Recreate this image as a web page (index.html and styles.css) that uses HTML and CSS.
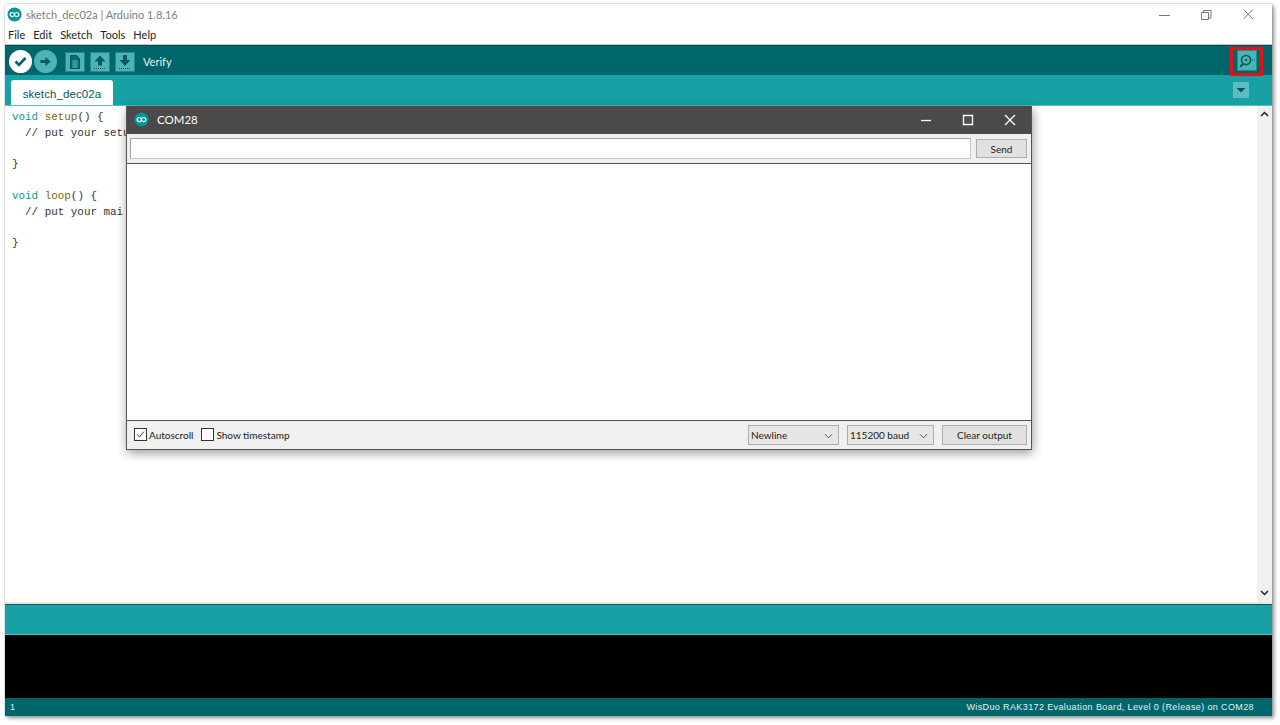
FILE: index.html
```html
<!DOCTYPE html>
<html lang="en">
<head>
<meta charset="utf-8">
<title>sketch_dec02a | Arduino 1.8.16</title>
<link rel="stylesheet" href="styles.css">
</head>
<body>
<div class="window">
  <header class="titlebar">
    <svg class="logo" viewBox="0 0 16 16"><circle cx="8" cy="8" r="7.500" fill="#00979c"/><path d="M6 5.800C4.500 5.800 3.300 6.800 3.300 8s1.200 2.200 2.700 2.200S8 8 8 8 7.500 5.800 6 5.800zm4 0C8.500 5.800 8 8 8 8s.5 2.200 2 2.200 2.700-1 2.700-2.200-1.200-2.200-2.700-2.200z" fill="none" stroke="#fff" stroke-width="1.200"/></svg>
    <span class="title-text">sketch_dec02a | Arduino 1.8.16</span>
    <div class="win-controls">
      <svg viewBox="0 0 42 20"><path d="M18 11.500h11" stroke="#777" fill="none"/></svg>
      <svg viewBox="0 0 42 20"><path d="M18.500 8.500h7v7h-7zM20.500 8.500v-2h7.500v7.500h-2.500" stroke="#777" fill="none"/></svg>
      <svg viewBox="0 0 42 20"><path d="M18.500 5.500l9.500 9.500M28 5.500L18.500 15" stroke="#777" fill="none"/></svg>
    </div>
  </header>
  <nav class="menubar"><span>File</span><span>Edit</span><span>Sketch</span><span>Tools</span><span>Help</span></nav>
  <div class="toolbar">
    <button class="round active" aria-label="Verify"><svg viewBox="0 0 23 23"><path d="M6.500 11.500l3.500 3.500 6.500-7" fill="none" stroke="#00626a" stroke-width="2.600"/></svg></button>
    <button class="round" aria-label="Upload"><svg viewBox="0 0 23 23"><path d="M6.500 10h5V6.800l5 4.700-5 4.700V13h-5z" fill="#005c5f"/></svg></button>
    <button class="square first" aria-label="New"><svg viewBox="0 0 18 18"><path d="M4.500 2.500h6l3 3v10h-9z" fill="#0b6a6e" stroke="#055"/><path d="M6 8h6M6 10h6M6 12h6M6 14h6M8 7v8M10 7v8" stroke="#5cc" stroke-width=".6"/></svg></button>
    <button class="square" aria-label="Open"><svg viewBox="0 0 18 18"><path d="M9 2.500l5.500 6H11v4H7v-4H3.500z" fill="#005c5f"/><path d="M3 15.500h12" stroke="#005c5f" stroke-dasharray="1 1"/></svg></button>
    <button class="square" aria-label="Save"><svg viewBox="0 0 18 18"><path d="M7 2h4v5h3.500L9 13 3.500 7H7z" fill="#005c5f"/><path d="M3 15.500h12" stroke="#005c5f" stroke-dasharray="1 1"/></svg></button>
    <span class="tool-label">Verify</span>
    <div class="highlight">
      <button class="square monitor" aria-label="Serial Monitor"><svg viewBox="0 0 19 19"><circle cx="8.500" cy="8.500" r="4.800" fill="none" stroke="#005c5f" stroke-width="1.800"/><circle cx="8.500" cy="8.500" r="1.300" fill="#005c5f"/><path d="M5.300 12.500l-2.800 3" stroke="#005c5f" stroke-width="2.200"/><path d="M15 8.500h1M17 8.500h1" stroke="#005c5f"/></svg></button>
    </div>
  </div>
  <div class="tabbar">
    <div class="tab">sketch_dec02a</div>
    <button class="tab-menu" aria-label="Tab menu"><svg viewBox="0 0 16 16"><path d="M3.500 6h9L8 10.500z" fill="#00565c"/></svg></button>
  </div>
  <main class="editor">
    <div class="code">
      <div class="line"><span class="kw">void</span> <span class="fn">setup</span>() {</div>
      <div class="line">  <span class="cm">// put your setu</span></div>
      <div class="line"></div>
      <div class="line">}</div>
      <div class="line"></div>
      <div class="line"><span class="kw">void</span> <span class="fn">loop</span>() {</div>
      <div class="line">  <span class="cm">// put your mai</span></div>
      <div class="line"></div>
      <div class="line">}</div>
    </div>
    <div class="scrollbar">
      <svg viewBox="0 0 15 15"><path d="M4 9l3.500-3.500L11 9" fill="none" stroke="#222" stroke-width="1.500"/></svg>
      <svg viewBox="0 0 15 15"><path d="M4 6l3.500 3.500L11 6" fill="none" stroke="#222" stroke-width="1.500"/></svg>
    </div>
  </main>
  <div class="console-head"></div>
  <div class="console"></div>
  <footer class="status"><span>1</span><span>WisDuo RAK3172 Evaluation Board, Level 0 (Release) on COM28</span></footer>
</div>

<section class="monitor-win">
  <header class="mon-title">
    <svg class="logo" viewBox="0 0 16 16"><circle cx="8" cy="8" r="7.500" fill="#00979c"/><path d="M6 5.800C4.500 5.800 3.300 6.800 3.300 8s1.200 2.200 2.700 2.200S8 8 8 8 7.500 5.800 6 5.800zm4 0C8.500 5.800 8 8 8 8s.5 2.200 2 2.200 2.700-1 2.700-2.200-1.200-2.200-2.700-2.200z" fill="none" stroke="#fff" stroke-width="1.200"/></svg>
    <span class="mon-name">COM28</span>
    <div class="mon-controls">
      <svg viewBox="0 0 42 20"><path d="M16 10.500h10" stroke="#fff" stroke-width="1.300" fill="none"/></svg>
      <svg viewBox="0 0 42 20"><path d="M16.500 5.500h9v9h-9z" stroke="#fff" stroke-width="1.300" fill="none"/></svg>
      <svg viewBox="0 0 42 20"><path d="M16 5l10 10M26 5L16 15" stroke="#fff" stroke-width="1.300" fill="none"/></svg>
    </div>
  </header>
  <div class="mon-input">
    <div class="field"></div>
    <button class="btn send">Send</button>
  </div>
  <div class="mon-output"></div>
  <div class="mon-foot">
    <label class="check"><span class="box"><svg viewBox="0 0 13 13"><path d="M2.500 6.500l3 3 5-6.500" fill="none" stroke="#222"/></svg></span>Autoscroll</label>
    <label class="check"><span class="box"></span>Show timestamp</label>
    <div class="select nl"><span>Newline</span><svg viewBox="0 0 10 6"><path d="M1 1l4 4 4-4" fill="none" stroke="#444"/></svg></div>
    <div class="select baud"><span>115200 baud</span><svg viewBox="0 0 10 6"><path d="M1 1l4 4 4-4" fill="none" stroke="#444"/></svg></div>
    <button class="btn clear">Clear output</button>
  </div>
</section>
</body>
</html>
```
FILE: styles.css
```css
* { box-sizing: border-box; }
html, body { margin: 0; height: 100%; overflow: hidden; background: #fff; }
body { padding: 4px 8px 9px 5px; font-family: Lato, "Open Sans", sans-serif; font-size: 11px; position: relative; }
button { font: inherit; padding: 0; cursor: default; }
svg { display: block; }

.window { height: 712px; display: flex; flex-direction: column; background: #fff; box-shadow: 0 0 1px #888, 2px 2px 4px rgba(0,0,0,.45); }

.titlebar { height: 21px; flex: none; display: flex; align-items: center; padding-left: 2px; }
.logo { width: 15px; height: 15px; flex: none; }
.title-text { margin-left: 4px; color: #808080; font-size: 11px; }
.win-controls { margin-left: auto; display: flex; margin-right: 5px; margin-top: -2px; }
.win-controls svg { width: 42px; height: 20px; }

.menubar { height: 20px; flex: none; display: flex; gap: 8px; align-items: center; padding-left: 3px; color: #222; font-size: 11px; border-bottom: 1px solid #c4c4c4; }

.toolbar { height: 30px; flex: none; display: flex; align-items: center; background: #00666b; padding: 2px 0 0 4px; border-top: 1px solid #034e52; }
.round { width: 23px; height: 23px; border-radius: 50%; border: 0; background: #4db4b6; margin-right: 2px; }
.round.active { background: #fff; }
.square { width: 20px; height: 20px; border: 1px solid #1b8d90; background: #4db4b6; margin-right: 5px; }
.square.first { margin-left: 6px; }
.tool-label { margin-left: 3px; color: #e6f2f2; font-size: 11px; }
.highlight { position: relative; z-index: 1; align-self: flex-start; margin: -1px 9px 0 auto; width: 33px; height: 29px; border: 3px solid #e3101e; display: flex; align-items: flex-start; justify-content: center; }
.monitor { width: 20px; height: 21px; margin: 0; }

.tabbar { height: 31px; flex: none; display: flex; align-items: flex-end; justify-content: space-between; background: #17a1a5; padding-left: 6px; border-bottom: 1px solid #4fc1c4; }
.tab { width: 102px; height: 25px; padding-top: 3px; background: #fff; color: #005c5f; font-size: 11.500px; letter-spacing: .1px; text-align: center; line-height: 22px; border-radius: 3px 3px 0 0; font-family: "Liberation Sans", sans-serif; }
.tab-menu { width: 16px; height: 16px; margin: 0 23px 7px 0; border: 0; background: #5ebcbe; }

.editor { flex: 1; min-height: 0; display: flex; justify-content: space-between; background: #fff; overflow: hidden; border-bottom: 2px solid #e6e6e6; }
.code { margin: 4px 0 0 7px; font-family: "Liberation Mono", monospace; font-size: 10.900px; line-height: 15.750px; color: #2a3a3a; }
.line { height: 15.750px; white-space: pre; }
.kw { color: #00979c; }
.fn { color: #7a6a00; }
.cm { color: #333; }
.scrollbar { width: 15px; background: #f0f0f0; display: flex; flex-direction: column; justify-content: space-between; padding: 1px 0 2px; }
.scrollbar svg { width: 15px; height: 15px; }

.console-head { height: 31px; flex: none; background: #17a1a5; border-top: 1px solid #0a5a5e; border-bottom: 1px solid #4fc1c4; }
.console { height: 63px; flex: none; background: #000; }
.status { height: 18px; flex: none; display: flex; justify-content: space-between; align-items: center; background: #00666b; color: #e6f2f2; font-family: "Liberation Sans", sans-serif; font-size: 9px; letter-spacing: .38px; padding: 0 18px 0 5px; }

.monitor-win { position: absolute; left: 126px; top: 106px; width: 906px; height: 344px; display: flex; flex-direction: column; background: #f0f0f0; border: 1px solid #555; border-top: 0; box-shadow: 1px 3px 10px rgba(0,0,0,.4); }
.mon-title { height: 28px; flex: none; display: flex; align-items: center; background: #4b4a48; padding: 0 0 1px 7px; color: #fff; }
.mon-name { margin-left: 8px; font-size: 11.500px; }
.mon-controls { margin-left: auto; display: flex; }
.mon-controls svg { width: 42px; height: 20px; }
.mon-input { height: 29px; flex: none; display: flex; align-items: center; padding: 0 4px 0 3px; gap: 5px; }
.field { flex: 1; height: 21px; background: #fff; border: 1px solid #a0a0a0; border-bottom-color: #c8c8c8; border-right-color: #c8c8c8; }
.btn { background: #e1e1e1; border: 1px solid #adadad; color: #222; font-size: 10px; height: 20px; }
.send { width: 51px; height: 19px; }
.mon-output { flex: 1; min-height: 0; background: #fff; border-top: 1px solid #555; border-bottom: 1px solid #555; }
.mon-foot { height: 28px; flex: none; display: flex; align-items: center; padding: 0 4px 1px 7px; font-size: 10px; color: #222; }
.check { display: flex; align-items: center; gap: 2px; margin-right: 8px; }
.box { width: 13px; height: 13px; border: 1px solid #333; background: #fff; flex: none; }
.select { height: 20px; display: flex; align-items: center; justify-content: space-between; background: #e6e6e6; border: 1px solid #adadad; padding: 0 5px 0 2px; }
.select svg { width: 9px; height: 6px; margin-top: 2px; }
.nl { width: 91px; margin-left: auto; margin-right: 8px; }
.baud { width: 87px; margin-right: 8px; }
.clear { width: 85px; }
```
